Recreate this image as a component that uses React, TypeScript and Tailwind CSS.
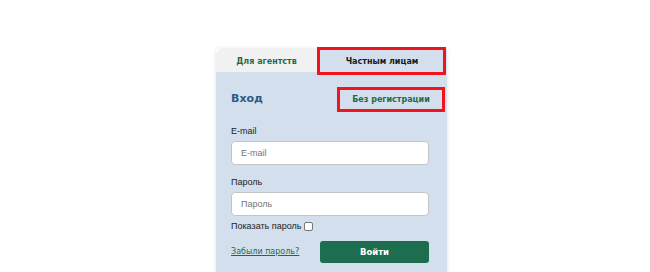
import * as React from "react";

export default function App() {
  const [showPassword, setShowPassword] = React.useState(false);

  return (
    <div className="min-h-[272px] bg-white pl-[216px] pt-[49px] font-['Liberation_Sans',Arial,sans-serif]">
      <div className="w-[231px] shadow-[0_0_4px_rgba(0,0,0,0.12)]">
        <div className="flex h-[23px]">
          <div className="flex w-[101px] items-center justify-center rounded-tl-[6px] bg-[#f1f1f1] pt-[2px] font-['DejaVu_Sans',Verdana,sans-serif] text-[8px] font-bold text-[#1e6b4c]">
            Для агентств
          </div>
          <div className="relative flex flex-1 items-center justify-center bg-[#d3dfed] pt-[2px] font-['DejaVu_Sans',Verdana,sans-serif] text-[8px] font-bold text-[#1a1a1a]">
            Частным лицам
            <span className="pointer-events-none absolute -top-[2px] -bottom-[3px] left-0 right-[1px] border-[3px] border-[#f2141c]" />
          </div>
        </div>

        <div className="bg-[#d3dfed] pb-[10px] pl-[15px] pr-[18px] pt-[15px]">
          <div className="-mr-[16px] flex items-center justify-between">
            <h2 className="font-['DejaVu_Sans',Verdana,sans-serif] text-[11px] font-bold text-[#2c5a85]">
              Вход
            </h2>
            <button
              type="button"
              className="flex h-[25px] w-[108px] items-center justify-center border-[3px] border-[#f2141c] font-['DejaVu_Sans',Verdana,sans-serif] text-[8px] font-bold text-[#1e6b4c]"
            >
              Без регистрации
            </button>
          </div>

          <label className="mt-[13px] block text-[9px] leading-[12px] text-[#222]">E-mail</label>
          <input
            type="text"
            placeholder="E-mail"
            className="mt-[4px] block h-[24px] w-full rounded-[4px] border border-[#c4c4c4] bg-white px-[9px] text-[9px] text-[#333] placeholder:text-[#757575]"
          />

          <label className="mt-[11px] block text-[9px] leading-[12px] text-[#222]">Пароль</label>
          <input
            type={showPassword ? "text" : "password"}
            placeholder="Пароль"
            className="mt-[4px] block h-[24px] w-full rounded-[4px] border border-[#c4c4c4] bg-white px-[9px] text-[9px] text-[#333] placeholder:text-[#757575]"
          />

          <label className="mt-[4px] flex items-center gap-[3px] text-[9px] leading-[12px] text-[#222]">
            Показать пароль
            <input
              type="checkbox"
              checked={showPassword}
              onChange={(e) => setShowPassword(e.target.checked)}
              className="h-[9px] w-[9px] appearance-none rounded-[2px] border border-[#777] bg-white"
            />
          </label>

          <div className="mt-[9px] flex items-center justify-between">
            <a
              href="#"
              className="font-['DejaVu_Sans',Verdana,sans-serif] text-[8px] text-[#1e6b4c] underline"
            >
              Забыли пароль?
            </a>
            <button
              type="button"
              className="flex h-[22px] w-[109px] items-center justify-center rounded-[3px] bg-[#1c6e4f] font-['DejaVu_Sans',Verdana,sans-serif] text-[8.5px] font-bold text-white"
            >
              Войти
            </button>
          </div>
        </div>
      </div>
    </div>
  );
}
